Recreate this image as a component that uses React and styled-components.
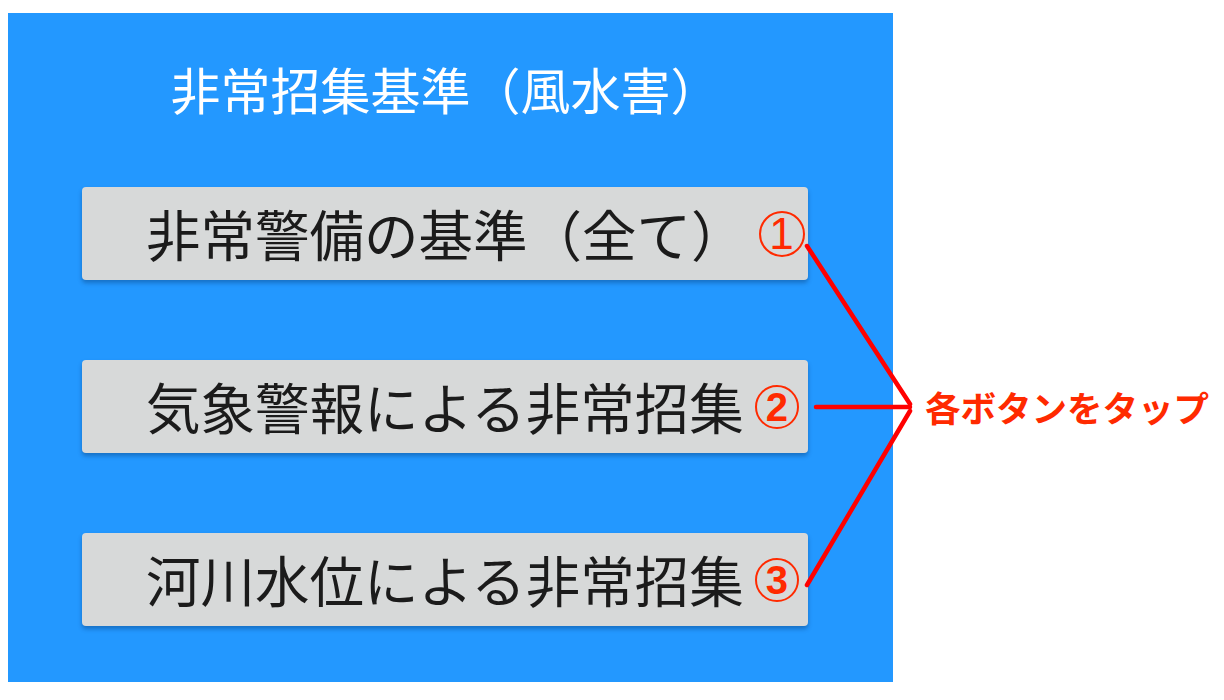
import React from "react";
import styled, { createGlobalStyle } from "styled-components";

const GlobalStyle = createGlobalStyle`
  html, body { margin: 0; padding: 0; background: #ffffff; }
  body { font-family: "Noto Sans CJK JP", "Noto Sans", sans-serif; }
`;

const Page = styled.div`
  position: relative;
  width: 1224px;
  height: 700px;
  overflow: hidden;
  background: #ffffff;
`;

const Panel = styled.section`
  margin: 13px 0 0 8px;
  width: 885px;
  height: 669px;
  background: #2398ff;
  display: flex;
  flex-direction: column;
  align-items: flex-start;
  box-sizing: border-box;
  padding-top: 50px;
`;

const Title = styled.h1`
  margin: 0;
  align-self: stretch;
  box-sizing: border-box;
  padding-right: 10px;
  text-align: center;
  color: #ffffff;
  font-family: "Noto Sans CJK JP", sans-serif;
  font-weight: 400;
  font-size: 50px;
  line-height: 50px;
  height: 50px;
`;

const ButtonList = styled.div`
  margin: 74px 0 0 74px;
  display: flex;
  flex-direction: column;
  gap: 80px;
`;

const MenuButton = styled.button`
  width: 726px;
  height: 93px;
  box-sizing: border-box;
  border: none;
  border-radius: 4px;
  background: #d7d9d9;
  box-shadow: 0 3px 4px rgba(0, 40, 90, 0.35);
  display: flex;
  align-items: center;
  padding: 0 0 0 64px;
  font-family: "Noto Sans CJK JP", sans-serif;
  cursor: pointer;
`;

const Label = styled.span`
  color: #1b1b1b;
  font-size: 54.5px;
  font-weight: 400;
  line-height: 1;
  white-space: nowrap;
`;

const Badge = styled.span`
  margin-left: ${(p) => p.$gap}px;
  width: ${(p) => p.$size}px;
  height: ${(p) => p.$size}px;
  box-sizing: border-box;
  border: 2px solid #ff2a00;
  border-radius: 50%;
  color: #ff2a00;
  display: flex;
  align-items: center;
  justify-content: center;
  font-family: "Liberation Sans", Arial, sans-serif;
  font-weight: ${(p) => (p.$bold ? 700 : 400)};
  font-size: ${(p) => (p.$bold ? 40 : 44)}px;
  line-height: 1;
  flex: none;
`;

const Lines = styled.svg`
  position: absolute;
  left: 0;
  top: 0;
  width: 1224px;
  height: 700px;
  pointer-events: none;
`;

const Callout = styled.div`
  position: absolute;
  left: 925px;
  top: 387px;
  color: #ff2a00;
  font-family: "Noto Sans CJK JP", sans-serif;
  font-weight: 700;
  font-size: 35.5px;
  line-height: 40px;
  white-space: nowrap;
`;

const items = [
  { label: "非常警備の基準（全て）", num: "1", bold: false, gap: 13, size: 46 },
  { label: "気象警報による非常招集", num: "2", bold: true, gap: 11, size: 44 },
  { label: "河川水位による非常招集", num: "3", bold: true, gap: 11, size: 44 },
];

export default function App() {
  return (
    <>
      <GlobalStyle />
      <Page>
        <Panel>
          <Title>非常招集基準（風水害）</Title>
          <ButtonList>
            {items.map((it) => (
              <MenuButton key={it.num} type="button">
                <Label>{it.label}</Label>
                <Badge $bold={it.bold} $gap={it.gap} $size={it.size}>
                  {it.num}
                </Badge>
              </MenuButton>
            ))}
          </ButtonList>
        </Panel>
        <Lines viewBox="0 0 1224 700">
          <g stroke="#ff0000" strokeWidth="4.5" strokeLinecap="round" fill="none">
            <line x1="807" y1="246" x2="910" y2="404" />
            <line x1="816" y1="407" x2="910" y2="407" />
            <line x1="807" y1="585" x2="910" y2="411" />
          </g>
        </Lines>
        <Callout>各ボタンをタップ</Callout>
      </Page>
    </>
  );
}
